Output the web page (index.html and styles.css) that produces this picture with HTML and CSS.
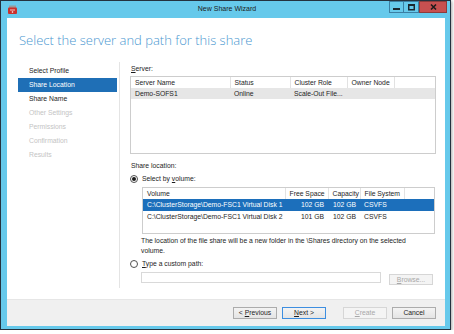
FILE: index.html
```html
<!DOCTYPE html>
<html lang="en">
<head>
  <meta charset="UTF-8">
  <title>New Share Wizard</title>
  <link rel="stylesheet" href="styles.css">
</head>
<body>
<div class="window">
  <div class="titlebar">
    <div class="app-icon">
      <svg width="9" height="9" viewBox="0 0 9 9">
        <rect x="1" y="0.5" width="7" height="2.5" fill="#9a9a9a"/>
        <rect x="0" y="2.5" width="9" height="6.5" rx="1" fill="#c9302c"/>
        <rect x="2" y="4.5" width="5" height="1" fill="#f6c4c0"/>
        <circle cx="4.5" cy="7" r="0.8" fill="#fff"/>
      </svg>
    </div>
    <div class="title">New Share Wizard</div>
    <div class="controls">
      <span class="ctl min">
        <svg width="7" height="7" viewBox="0 0 7 7"><rect x="0" y="4" width="7" height="2" fill="#1b2730"/></svg>
      </span>
      <span class="ctl max">
        <svg width="7" height="7" viewBox="0 0 7 7"><rect x="0.75" y="0.75" width="5.5" height="5" fill="none" stroke="#1b2730" stroke-width="1.5"/><rect x="0" y="0" width="7" height="2" fill="#1b2730"/></svg>
      </span>
      <span class="ctl close">
        <svg width="7" height="6" viewBox="0 0 7 6"><path d="M1 0.5 L6 5.5 M6 0.5 L1 5.5" stroke="#1b1b1b" stroke-width="1.5"/></svg>
      </span>
    </div>
  </div>

  <div class="content">
    <h1 class="heading">Select the server and path for this share</h1>

    <div class="main">
      <ul class="nav">
        <li>Select Profile</li>
        <li class="active">Share Location</li>
        <li>Share Name</li>
        <li class="off">Other Settings</li>
        <li class="off">Permissions</li>
        <li class="off">Confirmation</li>
        <li class="off">Results</li>
      </ul>
      <div class="sep"></div>

      <div class="panel">
        <div class="label"><u>S</u>erver:</div>
        <div class="listview servers">
          <table>
            <colgroup>
              <col style="width: 99px">
              <col style="width: 60px">
              <col style="width: 57px">
              <col style="width: 47px">
              <col>
            </colgroup>
            <tr>
              <th>Server Name</th>
              <th>Status</th>
              <th>Cluster Role</th>
              <th>Owner Node</th>
              <th class="last"></th>
            </tr>
            <tr class="inactive">
              <td>Demo-SOFS1</td>
              <td>Online</td>
              <td>Scale-Out File...</td>
              <td></td>
              <td></td>
            </tr>
          </table>
        </div>

        <div class="label section">Share location:</div>
        <div class="radio-row">
          <span class="radio checked"></span>
          <span>Select by <u>v</u>olume:</span>
        </div>
        <div class="listview volumes">
          <table>
            <colgroup>
              <col style="width: 142px">
              <col style="width: 43px">
              <col style="width: 32px">
              <col style="width: 44px">
              <col>
            </colgroup>
            <tr>
              <th>Volume</th>
              <th>Free Space</th>
              <th>Capacity</th>
              <th>File System</th>
              <th class="last"></th>
            </tr>
            <tr class="selected">
              <td>C:\ClusterStorage\Demo-FSC1 Virtual Disk 1</td>
              <td class="num">102 GB</td>
              <td class="num">102 GB</td>
              <td>CSVFS</td>
              <td></td>
            </tr>
            <tr>
              <td>C:\ClusterStorage\Demo-FSC1 Virtual Disk 2</td>
              <td class="num">101 GB</td>
              <td class="num">102 GB</td>
              <td>CSVFS</td>
              <td></td>
            </tr>
          </table>
        </div>

        <p class="note">The location of the file share will be a new folder in the \Shares directory on the selected<br>volume.</p>

        <div class="radio-row">
          <span class="radio"></span>
          <span><u>T</u>ype a custom path:</span>
        </div>
        <div class="path-row">
          <div class="path-input"></div>
          <button class="btn small off"><u>B</u>rowse...</button>
        </div>
      </div>
    </div>

    <div class="footer">
      <button class="btn">&lt; <u>P</u>revious</button>
      <button class="btn default"><u>N</u>ext &gt;</button>
      <button class="btn off create"><u>C</u>reate</button>
      <button class="btn">Cancel</button>
    </div>
  </div>
</div>
</body>
</html>
```

FILE: styles.css
```css
* {
  box-sizing: border-box;
}

body {
  margin: 0;
  background-color: #fff;
  font-family: "Liberation Sans", Arial, sans-serif;
  font-size: 6.8px;
  color: #1e1e1e;
}

.window {
  width: 451px;
  height: 330px;
  border: 1px solid #24323f;
  background-color: #66c9eb;
  padding: 0 5px 3px 6px;
  display: flex;
  flex-direction: column;
  box-shadow: 1px 1px 3px rgba(0, 0, 0, 0.35);
}

/* title bar */
.titlebar {
  height: 17px;
  margin-right: -2px;
  display: grid;
  grid-template-columns: 1fr auto 1fr;
  align-items: start;
}

.app-icon {
  margin: 4px 0 0 1px;
  width: 9px;
  height: 9px;
}

.app-icon svg {
  display: block;
}

.title {
  font-size: 7px;
  line-height: 16px;
  color: #1b1b1b;
}

.controls {
  justify-self: end;
  display: flex;
}

.ctl {
  height: 12px;
  border: 1px solid #3b7fa3;
  display: flex;
  align-items: center;
  justify-content: center;
}

.ctl.min {
  width: 15px;
}

.ctl.max {
  width: 15px;
  border-left: none;
}

.ctl.close {
  width: 28px;
  border: 1px solid #8e3b3b;
  background-color: #c75050;
}

/* content */
.content {
  flex: 1;
  background-color: #fff;
  display: flex;
  flex-direction: column;
}

.heading {
  margin: 12px 0 12px 12px;
  font-family: "Open Sans", "Liberation Sans", sans-serif;
  font-weight: 300;
  font-size: 13px;
  line-height: 20px;
  color: #4a97d0;
}

.main {
  display: flex;
  height: 230px;
  padding-left: 11px;
}

.nav {
  list-style: none;
  margin: 0;
  padding: 2px 0 0;
  width: 99px;
}

.nav li {
  height: 14px;
  line-height: 14px;
  padding-left: 11px;
}

.nav li.active {
  background-color: #1f6fb6;
  color: #fff;
}

.nav li.off {
  color: #c4c4c4;
}

.sep {
  width: 1px;
  height: 226px;
  margin-left: 2px;
  background-color: #e4e4e4;
}

.panel {
  flex: 1;
  padding: 0 9px 0 10px;
}

.label {
  margin-top: 2px;
  line-height: 10px;
  padding-left: 1px;
}

.label.section {
  margin-top: 7px;
}

/* list views */
.listview {
  margin-top: 2px;
  border: 1px solid #cdcdcd;
  overflow: hidden;
}

.listview.servers {
  height: 78px;
}

.listview.volumes {
  height: 47px;
  margin: 3px 1px 0 12px;
}

.listview table {
  width: 100%;
  border-collapse: collapse;
  table-layout: fixed;
}

.listview th,
.listview td {
  padding: 0 0 0 4px;
  line-height: 10px;
  white-space: nowrap;
  overflow: hidden;
  text-align: left;
}

.listview th {
  height: 11px;
  font-weight: normal;
  border-right: 1px solid #e2e2e2;
}

.listview th.last {
  border-right: none;
}

.listview td {
  height: 11px;
}

.listview td.num {
  text-align: right;
  padding: 0 4px 0 0;
}

.listview tr.inactive td {
  background-color: #e6e6e6;
}

.listview tr.selected td {
  height: 12px;
  background-color: #1c6fbb;
  color: #fff;
}

/* radios */
.radio-row {
  margin-top: 3px;
  line-height: 10px;
  display: flex;
  align-items: center;
  gap: 4px;
}

.radio {
  width: 8px;
  height: 8px;
  border: 1px solid #505050;
  border-radius: 50%;
  display: flex;
  align-items: center;
  justify-content: center;
  background-color: #fff;
}

.radio.checked::after {
  content: "";
  width: 4px;
  height: 4px;
  border-radius: 50%;
  background-color: #1a1a1a;
}

.note {
  margin: 2px 0 0;
  padding-left: 11px;
  line-height: 10px;
}

.path-row {
  display: flex;
  align-items: flex-start;
  gap: 8px;
  margin-top: 3px;
  padding-left: 11px;
}

.path-input {
  width: 240px;
  height: 11px;
  border: 1px solid #d9d9d9;
}

/* buttons */
.btn {
  width: 44px;
  height: 12px;
  padding: 0;
  border: 1px solid #acacac;
  background: linear-gradient(#f3f3f3, #e4e4e4);
  font-family: inherit;
  font-size: 6.8px;
  line-height: 10px;
  color: #1e1e1e;
}

.btn.small {
  height: 11px;
  margin-top: 2px;
}

.btn.default {
  border-color: #3d8ee0;
}

.btn.off {
  color: #a8a8a8;
  border-color: #d6d6d6;
  background: #f4f4f4;
}

.footer {
  margin-top: auto;
  height: 27px;
  border-top: 1px solid #e6e6e6;
  background-color: #f0f0f0;
  padding-right: 9px;
  display: flex;
  align-items: center;
  justify-content: flex-end;
  gap: 5px;
}

.footer .create {
  margin-left: 12px;
}
```
